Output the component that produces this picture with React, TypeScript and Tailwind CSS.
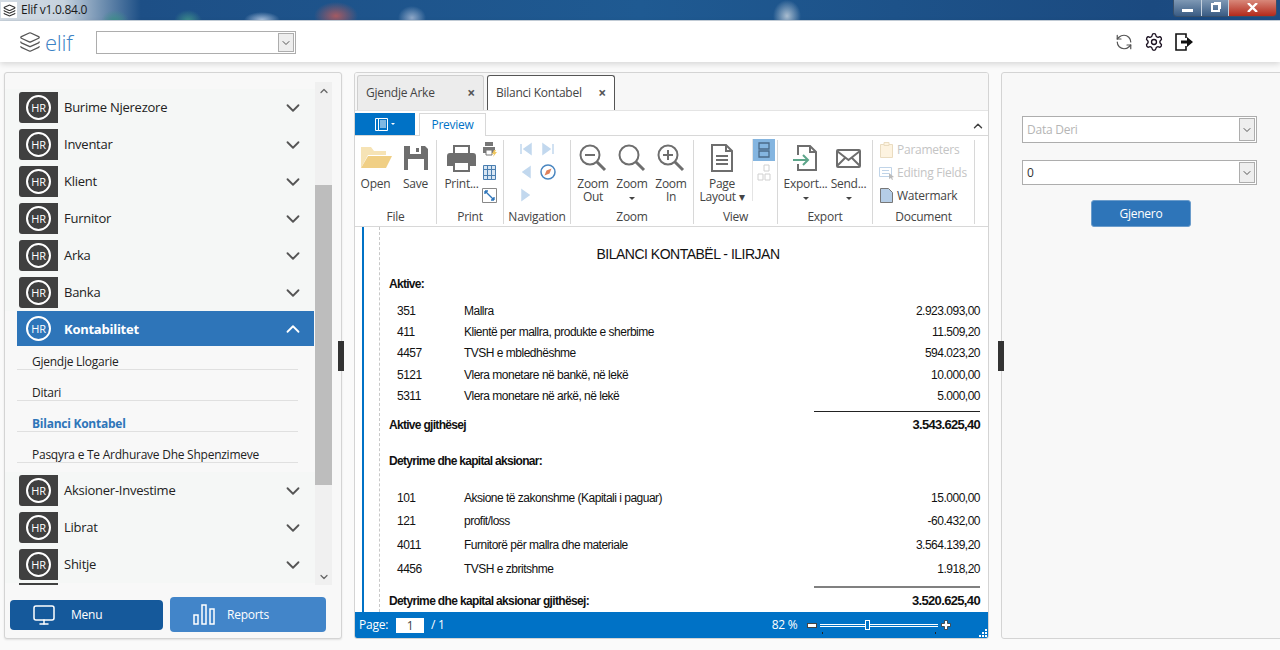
import { ChevronDown, ChevronUp, Layers, Monitor, RefreshCcw, Settings } from "lucide-react";

const font = "font-['Open_Sans','Noto_Sans',sans-serif]";

const topMenus = ["Burime Njerezore", "Inventar", "Klient", "Furnitor", "Arka", "Banka"];
const bottomMenus = ["Aksioner-Investime", "Librat", "Shitje"];
const subMenus = ["Gjendje Llogarie", "Ditari", "Bilanci Kontabel", "Pasqyra e Te Ardhurave Dhe Shpenzimeve"];

const aktive = [
  { code: "351", name: "Mallra", value: "2.923.093,00", h: "h-[21px]" },
  { code: "411", name: "Klientë per mallra, produkte e sherbime", value: "11.509,20", h: "h-[21px]" },
  { code: "4457", name: "TVSH e mbledhëshme", value: "594.023,20", h: "h-[22px]" },
  { code: "5121", name: "Vlera monetare në bankë, në lekë", value: "10.000,00", h: "h-[21px]" },
  { code: "5311", name: "Vlera monetare në arkë, në lekë", value: "5.000,00", h: "h-[22px]" },
];

const detyrime = [
  { code: "101", name: "Aksione të zakonshme (Kapitali i paguar)", value: "15.000,00", h: "h-[23px]" },
  { code: "121", name: "profit/loss", value: "-60.432,00", h: "h-[24px]" },
  { code: "4011", name: "Furnitorë për mallra dhe materiale", value: "3.564.139,20", h: "h-[24px]" },
  { code: "4456", name: "TVSH e zbritshme", value: "1.918,20", h: "h-[24px]" },
];

function HrBadge({ size = "w-[25px] h-[25px]" }: { size?: string }) {
  return (
    <span className={`${size} rounded-full border-2 border-white flex items-center justify-center text-white text-[11px] leading-none`}>
      HR
    </span>
  );
}

function MenuRow({ label }: { label: string }) {
  return (
    <div className="h-[37px] flex items-center bg-[#f5f7f6] pl-[14px] pr-[11px] shrink-0">
      <div className="w-[39px] h-[31px] bg-[#404040] rounded-l-[3px] flex items-center justify-center">
        <HrBadge />
      </div>
      <span className="ml-[6px] text-[13px] text-[#222] flex-1">{label}</span>
      <ChevronDown className="w-[22px] h-[22px] text-[#555]" strokeWidth={2} />
    </div>
  );
}

function Combo({ text, muted, w, h = "h-[25px]" }: { text: string; muted?: boolean; w: string; h?: string }) {
  return (
    <div className={`${w} ${h} bg-white border border-[#adadad] flex items-stretch justify-between pl-[4px] pr-[1px] py-[1px]`}>
      <span className={`self-center text-[12px] ${muted ? "text-[#b5b5b5]" : "text-[#333]"}`}>{text}</span>
      <span className="w-[16px] bg-[#eeeeee] border border-[#adadad] flex items-center justify-center">
        <ChevronDown className="w-[12px] h-[12px] text-[#555]" strokeWidth={2} />
      </span>
    </div>
  );
}

function Group({ label, w, children }: { label: string; w: string; children: React.ReactNode }) {
  return (
    <div className={`${w} h-[84px] mt-[4px] border-r border-[#d8d8d8] flex flex-col items-center shrink-0`}>
      <div className="flex-1 w-full flex justify-center min-h-0">{children}</div>
      <span className="text-[12px] leading-[14px] text-[#444]">{label}</span>
    </div>
  );
}

function BigButton({ icon, label, caret, w = "w-[39px]" }: { icon: React.ReactNode; label: string; caret?: boolean; w?: string }) {
  return (
    <div className={`${w} flex flex-col items-center text-[12px] leading-[13px] text-[#444]`}>
      <div className="h-[34px] flex items-center justify-center">{icon}</div>
      <span className="mt-[2px] whitespace-pre text-center">{label}</span>
      {caret && <span className="mt-[7px] w-0 h-0 border-x-[3px] border-x-transparent border-t-[3px] border-t-[#444]" />}
    </div>
  );
}

function Magnifier({ kind }: { kind: "in" | "out" | "none" }) {
  return (
    <svg width="28" height="28" viewBox="0 0 28 28" fill="none" stroke="#6e6e6e" strokeWidth="2">
      <circle cx="11" cy="11" r="9.5" />
      <path d="M18 18l8 8" strokeWidth="3" />
      {kind !== "none" && <path d="M6 11h10" />}
      {kind === "in" && <path d="M11 6v10" />}
    </svg>
  );
}

function ReportRow({ code, name, value, h }: { code: string; name: string; value: string; h: string }) {
  return (
    <div className={`${h} flex items-center text-[12px] text-[#111] tracking-[-0.5px]`}>
      <span className="w-[75px] pl-[8px]">{code}</span>
      <span className="flex-1">{name}</span>
      <span>{value}</span>
    </div>
  );
}

function NavTriangle({ dir }: { dir: "first" | "last" | "left" | "right" }) {
  const d = { first: "M13 3L6 8l7 5zM3 3v10", last: "M3 3l7 5-7 5zM13 3v10", left: "M12 3L5 8l7 5z", right: "M4 3l7 5-7 5z" }[dir];
  return (
    <svg width="16" height="16" viewBox="0 0 16 16" fill="#c2d8ee" stroke="#c2d8ee" strokeWidth="1.5">
      <path d={d} />
    </svg>
  );
}

export default function App() {
  return (
    <div className={`${font} tracking-[-0.25px] relative w-[1280px] h-[650px] overflow-hidden bg-[#fafafa] flex flex-col`}>
      {/* title bar */}
      <div className="h-[21px] shrink-0 flex items-center border-b border-[#c8d2dc] bg-[radial-gradient(ellipse_14px_11px_at_115px_21px,#3f8f8a,transparent),radial-gradient(ellipse_14px_11px_at_188px_21px,#3f8f8a,transparent),radial-gradient(ellipse_18px_8px_at_262px_20px,#a9c0dc,transparent),radial-gradient(ellipse_22px_14px_at_336px_16px,#a55a62,transparent),radial-gradient(ellipse_14px_12px_at_412px_18px,#8fa8c8,transparent),radial-gradient(ellipse_14px_16px_at_787px_16px,#a9bdd0,transparent),linear-gradient(90deg,#d4dce4_0%,#c6d2de_5%,#6f8fb0_8%,#1d4f86_11%,#1f5a92_50%,#1b4a80_90%,#1d4d85_100%)]">
        <span className="w-[16px] h-[16px] ml-[1px] bg-white flex items-center justify-center">
          <Layers className="w-[13px] h-[13px] text-[#333]" />
        </span>
        <span className="ml-[4px] text-[12px] text-[#1a1a1a]">Elif v1.0.84.0</span>
        <div className="ml-auto mr-[3px] mb-[4px] h-[17px] flex border border-t-0 border-[#39506a] rounded-b-[4px] overflow-hidden">
          <span className="w-[28px] bg-[linear-gradient(#7e98b4,#3a5c84)] flex items-end justify-center pb-[4px] border-r border-[#c5d1de]">
            <span className="w-[11px] h-[3px] bg-white" />
          </span>
          <span className="w-[27px] bg-[linear-gradient(#7e98b4,#3a5c84)] flex items-center justify-center border-r border-[#c5d1de]">
            <span className="w-[9px] h-[9px] border-2 border-white shadow-[2px_-2px_0_-1px_#ffffff]" />
          </span>
          <span className="w-[47px] bg-[linear-gradient(#d8887a,#b3291b)] flex items-center justify-center">
            <svg width="11" height="9" viewBox="0 0 11 9" stroke="#fff" strokeWidth="2.4">
              <path d="M1 0l9 9M10 0L1 9" />
            </svg>
          </span>
        </div>
      </div>

      {/* top bar */}
      <div className="h-[41px] shrink-0 bg-white flex items-center shadow-[0_2px_6px_rgba(0,0,0,0.15)] z-10">
        <Layers className="ml-[19px] w-[22px] h-[22px] text-[#555]" strokeWidth={1.4} />
        <span className="ml-[4px] text-[22px] leading-none text-[#3c82c4] font-light">elif</span>
        <div className="ml-[23px] mt-[2px]">
          <Combo text="" w="w-[200px]" h="h-[23px]" />
        </div>
        <RefreshCcw className="ml-[819px] w-[18px] h-[18px] text-[#555]" strokeWidth={1.6} />
        <Settings className="ml-[11px] w-[20px] h-[20px] text-[#1a1020]" strokeWidth={1.6} />
        <svg className="ml-[11px]" width="18" height="18" viewBox="0 0 18 18" fill="none">
          <path d="M11 5V1H1v16h10v-4" stroke="#111" strokeWidth="1.6" />
          <path d="M6 7.5h6V4l6 5-6 5v-3.5H6z" fill="#111" />
        </svg>
      </div>

      {/* main */}
      <div className="flex-1 flex pt-[10px] pb-[11px] pl-[4px] gap-[12px] min-h-0">
        {/* left panel */}
        <div className="w-[338px] shrink-0 bg-[#f8f8f8] border border-[#d4d4d4] rounded-[3px] shadow-[0_1px_2px_rgba(0,0,0,0.1)] flex flex-col">
          <div className="h-[503px] mt-[9px] flex shrink-0">
            <div className="w-[310px] overflow-hidden flex flex-col pt-[7px]">
              {topMenus.map((m) => (
                <MenuRow key={m} label={m} />
              ))}
              <div className="h-[35px] shrink-0 ml-[12px] mr-[1px] bg-[#2e75b9] flex items-center pl-[9px] pr-[10px]">
                <HrBadge />
                <span className="ml-[13px] mt-[2px] text-[13px] font-bold text-white flex-1">Kontabilitet</span>
                <ChevronUp className="w-[22px] h-[22px] text-white" strokeWidth={2} />
              </div>
              <div className="ml-[12px] mr-[17px] shrink-0 mb-[9px]">
                {subMenus.map((s, i) => (
                  <div
                    key={s}
                    className={`${i === 0 ? "h-[24px]" : "h-[31px]"} flex items-end pl-[15px] border-b border-[#e0e0e0] text-[12px] leading-[14px] ${
                      i === 2 ? "font-bold text-[#2e75b9]" : "text-[#222]"
                    }`}
                  >
                    {s}
                  </div>
                ))}
              </div>
              {bottomMenus.map((m) => (
                <MenuRow key={m} label={m} />
              ))}
              <div className="h-[3px] shrink-0 ml-[14px] w-[39px] bg-[#404040]" />
            </div>
            <div className="w-[17px] bg-[#f0f0f0] flex flex-col items-center">
              <div className="h-[103px] shrink-0">
                <ChevronUp className="w-[12px] h-[12px] mt-[3px] text-[#666]" strokeWidth={2.5} />
              </div>
              <div className="w-[17px] h-[300px] shrink-0 bg-[#bdbdbd]" />
              <div className="flex-1 flex items-end">
                <ChevronDown className="w-[12px] h-[12px] mb-[2px] text-[#666]" strokeWidth={2.5} />
              </div>
            </div>
          </div>
          <div className="flex items-center pl-[5px] gap-[7px] mt-[12px]">
            <div className="w-[153px] h-[30px] rounded-[4px] bg-[#15599b] flex items-center text-white text-[12px]">
              <Monitor className="ml-[22px] w-[24px] h-[24px]" strokeWidth={1.5} />
              <span className="ml-[15px]">Menu</span>
            </div>
            <div className="w-[156px] h-[35px] rounded-[4px] bg-[#4285c9] flex items-center text-white text-[12px]">
              <svg className="ml-[23px]" width="23" height="21" viewBox="0 0 23 21" fill="none" stroke="#fff" strokeWidth="1.5">
                <rect x="1" y="11" width="4" height="9" />
                <rect x="9" y="1" width="4" height="19" />
                <rect x="17" y="5" width="4" height="15" />
              </svg>
              <span className="ml-[11px]">Reports</span>
            </div>
          </div>
        </div>

        {/* center panel */}
        <div className="w-[635px] shrink-0 border border-[#d4d4d4] rounded-[3px] bg-white flex flex-col overflow-hidden">
          <div className="h-[38px] shrink-0 bg-[#f7f7f7] border-b border-[#e4e4e4] flex items-end pl-[2px] gap-[3px]">
            <div className="w-[127px] h-[35px] bg-[#ececec] border border-b-0 border-[#cfcfcf] rounded-t-[3px] flex items-center px-[8px] text-[12px] text-[#444]">
              <span className="flex-1">Gjendje Arke</span>
              <span className="text-[#555] text-[14px] font-bold leading-none">×</span>
            </div>
            <div className="w-[128px] h-[35px] bg-white border border-b-0 border-[#555] rounded-t-[3px] flex items-center px-[8px] text-[12px] text-[#444]">
              <span className="flex-1">Bilanci Kontabel</span>
              <span className="text-[#555] text-[14px] font-bold leading-none">×</span>
            </div>
          </div>

          {/* ribbon tabs */}
          <div className="h-[25px] shrink-0 flex items-end border-b border-[#d8d8d8]">
            <div className="w-[60px] h-[22px] bg-[#0072c6] flex items-center justify-center gap-[2px]">
              <svg width="14" height="13" viewBox="0 0 14 13" fill="none" stroke="#fff">
                <path d="M.5.5h3v12h-3zM3.5.5h9v12h-9z" />
                <path d="M5 3h6M5 5h6M5 7h6M5 9h6" />
              </svg>
              <span className="w-0 h-0 border-x-[2px] border-x-transparent border-t-[2px] border-t-white" />
            </div>
            <div className="ml-[4px] w-[67px] h-[23px] -mb-px bg-white border border-b-0 border-[#d8d8d8] flex items-center justify-center text-[12px] text-[#0072c6]">
              Preview
            </div>
            <ChevronUp className="ml-auto mr-[3px] mb-[2px] w-[14px] h-[14px] text-[#444]" strokeWidth={2.5} />
          </div>

          {/* ribbon body */}
          <div className="h-[91px] shrink-0 flex border-b border-[#d8d8d8]">
            <Group label="File" w="w-[82px]">
              <div className="flex gap-[1px] pt-[1px]">
                <BigButton
                  label="Open"
                  icon={
                    <svg width="32" height="24" viewBox="0 0 32 24">
                      <path d="M1 22V1h10l3 4h12v4H8L1 22z" fill="#f6e3b5" />
                      <path d="M8 10h24l-6 12H1z" fill="#f0cf85" />
                    </svg>
                  }
                />
                <BigButton
                  label="Save"
                  icon={
                    <svg width="26" height="26" viewBox="0 0 26 26">
                      <path d="M1 1h21l3 3v21H1z" fill="#6e6e6e" />
                      <path d="M7 1h11v8H7z" fill="#fff" />
                      <path d="M13 3h3v4h-3z" fill="#6e6e6e" />
                      <path d="M5 14h16v11H5z" fill="#fff" />
                    </svg>
                  }
                />
              </div>
            </Group>
            <Group label="Print" w="w-[67px]">
              <div className="flex gap-[2px] pt-[1px]">
                <BigButton
                  label="Print..."
                  w="w-[36px]"
                  icon={
                    <svg width="29" height="27" viewBox="0 0 29 27">
                      <path d="M7 1h15v8H7z" fill="none" stroke="#6e6e6e" strokeWidth="2" />
                      <path d="M3 8h23a3 3 0 013 3v10h-6v-5H6v5H0V11a3 3 0 013-3z" fill="#6e6e6e" />
                      <path d="M7 17h15v9H7z" fill="none" stroke="#6e6e6e" strokeWidth="2" />
                    </svg>
                  }
                />
                <div className="flex flex-col gap-[8px] pt-[1px]">
                  <svg width="15" height="15" viewBox="0 0 15 15">
                    <path d="M3 0h8v4H3zM1 5h12v6H1z" fill="#777" />
                    <path d="M4 8h6v5H4z" fill="#fff" stroke="#777" />
                    <path d="M12 8l-2 4h2l-1 3 4-5h-2l1-2z" fill="#f0c75e" />
                  </svg>
                  <svg width="15" height="15" viewBox="0 0 15 15" fill="#d8e6f3" stroke="#4a7eb0">
                    <path d="M1.5.5h12v14h-12zM5.5.5v14M9.5.5v14M1.5 4.5h12M1.5 10.5h12" />
                  </svg>
                  <svg width="15" height="15" viewBox="0 0 15 15" fill="none">
                    <path d="M.5.5h14v14H.5z" stroke="#888" />
                    <path d="M3 3l9 9M3 3h3M3 3v3M12 12H9M12 12V9" stroke="#2e75b9" strokeWidth="1.4" />
                  </svg>
                </div>
              </div>
            </Group>
            <Group label="Navigation" w="w-[67px]">
              <div className="grid grid-cols-2 gap-x-[6px] gap-y-[7px] pt-[1px] h-fit w-[38px] justify-items-center">
                <NavTriangle dir="first" />
                <NavTriangle dir="last" />
                <NavTriangle dir="left" />
                <svg width="16" height="16" viewBox="0 0 16 16" fill="none">
                  <circle cx="8" cy="8" r="7" stroke="#4a86c0" strokeWidth="1.5" />
                  <path d="M11.5 4.5L9.5 9.5 4.5 11.5 6.5 6.5z" fill="#e0805a" />
                </svg>
                <NavTriangle dir="right" />
              </div>
            </Group>
            <Group label="Zoom" w="w-[123px]">
              <div className="flex pt-[1px]">
                <BigButton label={"Zoom\nOut"} icon={<Magnifier kind="out" />} />
                <BigButton label="Zoom" caret icon={<Magnifier kind="none" />} />
                <BigButton label={"Zoom\nIn"} icon={<Magnifier kind="in" />} />
              </div>
            </Group>
            <Group label="View" w="w-[84px]">
              <div className="flex pt-[1px] w-full pl-[6px]">
                <BigButton
                  label={"Page\nLayout ▾"}
                  w="w-[44px]"
                  icon={
                    <svg width="22" height="28" viewBox="0 0 22 28" fill="none" stroke="#6e6e6e" strokeWidth="2">
                      <path d="M1 1h14l6 6v20H1z" />
                      <path d="M15 1v6h6M5 12h12M5 16h12M5 20h12" />
                    </svg>
                  }
                />
                <div className="ml-[8px] -mt-[2px] flex flex-col items-center border-l border-[#e4e4e4] h-[62px]">
                  <div className="w-[22px] h-[22px] bg-[#84b5e0] flex items-center justify-center">
                    <svg width="12" height="16" viewBox="0 0 12 16" fill="none" stroke="#4a6a88" strokeWidth="1.3">
                      <path d="M1 1h10v6H1zM1 9h10v6H1z" />
                    </svg>
                  </div>
                  <svg className="mt-[3px]" width="16" height="18" viewBox="0 0 16 18" fill="none" stroke="#d0d0d0">
                    <path d="M8 1h5v6H8zM2 10h5v6H2zM9 10h5v6H9z" />
                  </svg>
                </div>
              </div>
            </Group>
            <Group label="Export" w="w-[95px]">
              <div className="flex pt-[1px] gap-[3px]">
                <BigButton
                  label="Export..."
                  caret
                  w="w-[44px]"
                  icon={
                    <svg width="26" height="26" viewBox="0 0 26 26" fill="none">
                      <path d="M5 10V1h12l6 6v18H5v-6" stroke="#6e6e6e" strokeWidth="2" />
                      <path d="M17 1v6h6" stroke="#6e6e6e" strokeWidth="2" />
                      <path d="M0 15h14M10 10l5 5-5 5" stroke="#5da58a" strokeWidth="2" />
                    </svg>
                  }
                />
                <BigButton
                  label="Send..."
                  caret
                  w="w-[36px]"
                  icon={
                    <svg width="25" height="19" viewBox="0 0 25 19" fill="none" stroke="#6e6e6e" strokeWidth="2">
                      <rect x="1" y="1" width="23" height="17" rx="1" />
                      <path d="M1 2l11.5 9L24 2M1 17l8-8M24 17l-8-8" />
                    </svg>
                  }
                />
              </div>
            </Group>
            <Group label="Document" w="w-[102px]">
              <div className="flex flex-col items-start gap-[6px] w-full pl-[7px] pt-[1px] text-[12px] leading-[17px]">
                <div className="flex items-center gap-[4px] text-[#c4c4c4]">
                  <svg width="13" height="16" viewBox="0 0 13 16" fill="#fdf3e0" stroke="#eadcc0">
                    <path d="M.5 2.5h12v13H.5z" />
                    <path d="M4 .5h5v3H4z" />
                  </svg>
                  Parameters
                </div>
                <div className="flex items-center gap-[2px] text-[#c4c4c4] -ml-[1px]">
                  <svg width="16" height="14" viewBox="0 0 16 14" fill="none" stroke="#c0d4e8">
                    <path d="M.5 1.5h12v9H.5zM3 4.5h7M3 7.5h7" />
                    <path d="M10 7l5 4-2 .5 1 2-1 .5-1-2-2 1z" fill="#bbb" stroke="none" />
                  </svg>
                  Editing Fields
                </div>
                <div className="flex items-center gap-[4px] text-[#444]">
                  <svg width="13" height="15" viewBox="0 0 13 15" fill="#b5cde6" stroke="#777">
                    <path d="M.5.5h8l4 4v10H.5z" />
                  </svg>
                  Watermark
                </div>
              </div>
            </Group>
          </div>

          {/* report */}
          <div className="flex-1 min-h-0 overflow-hidden flex font-['Liberation_Sans',Arial,sans-serif]">
            <div className="ml-[7px] w-[2px] bg-[#0072c6] shrink-0" />
            <div className="ml-[15px] w-0 border-l border-dashed border-[#c8c8c8] shrink-0" />
            <div className="ml-[9px] w-[591px] pt-[15px] shrink-0">
              <div className="text-center text-[14px] leading-[24px] text-[#111] tracking-[-0.5px] pl-[7px]">BILANCI KONTABËL - ILIRJAN</div>
              <div className="mt-[8px] h-[20px] flex items-center text-[12px] font-bold tracking-[-0.7px] text-[#111]">Aktive:</div>
              <div className="mt-[6px]">
                {aktive.map((r) => (
                  <ReportRow key={r.code} {...r} />
                ))}
              </div>
              <div className="mt-[4px] ml-[425px] border-t border-[#222]" />
              <div className="h-[26px] flex items-center justify-between text-[12px] font-bold tracking-[-0.7px] text-[#111]">
                <span>Aktive gjithësej</span>
                <span className="text-[13px]">3.543.625,40</span>
              </div>
              <div className="mt-[13px] h-[20px] flex items-center text-[12px] font-bold tracking-[-0.7px] text-[#111]">Detyrime dhe kapital aksionar:</div>
              <div className="mt-[15px]">
                {detyrime.map((r) => (
                  <ReportRow key={r.code} {...r} />
                ))}
              </div>
              <div className="mt-[5px] ml-[425px] border-t-2 border-[#808080]" />
              <div className="h-[26px] flex items-center justify-between text-[12px] font-bold tracking-[-0.65px] text-[#111]">
                <span>Detyrime dhe kapital aksionar gjithësej:</span>
                <span className="text-[13px]">3.520.625,40</span>
              </div>
            </div>
          </div>

          {/* status bar */}
          <div className="relative h-[26px] shrink-0 bg-[#0072c6] flex items-center text-white text-[12px] pl-[4px]">
            <span>Page:</span>
            <span className="ml-[8px] mt-[1px] w-[28px] h-[15px] bg-white text-[#444] flex items-center justify-center">1</span>
            <span className="ml-[7px]">/ 1</span>
            <span className="ml-[327px]">82 %</span>
            <span className="ml-[10px] w-[10px] h-[5px] bg-white border border-[#444]" />
            <div className="relative ml-[3px] w-[118px] h-[3px] border-y border-white">
              <span className="absolute left-[45px] -top-[5px] w-[5px] h-[10px] bg-[#0072c6] border border-white" />
              <span className="absolute left-[2px] top-[7px] w-px h-[2px] bg-[#222]" />
              <span className="absolute left-[115px] top-[7px] w-px h-[2px] bg-[#222]" />
            </div>
            <svg className="ml-[3px]" width="10" height="10" viewBox="0 0 10 10" fill="#fff" stroke="#333" strokeWidth="0.8">
              <path d="M3.5.5h3v3h3v3h-3v3h-3v-3h-3v-3h3z" />
            </svg>
            <svg className="absolute right-[1px] bottom-[1px]" width="9" height="9" viewBox="0 0 9 9" fill="#fff">
              <path d="M7 1h2v2H7zM4 4h2v2H4zM7 4h2v2H7zM1 7h2v2H1zM4 7h2v2H4zM7 7h2v2H7z" />
            </svg>
          </div>
        </div>

        {/* right panel */}
        <div className="w-[280px] shrink-0 bg-[#f8f8f8] border border-[#d4d4d4] rounded-l-[3px] flex flex-col items-start pl-[20px] pt-[43px]">
          <Combo text="Data Deri" muted w="w-[235px]" h="h-[27px]" />
          <div className="mt-[17px]">
            <Combo text="0" w="w-[235px]" />
          </div>
          <div className="mt-[15px] ml-[69px] w-[100px] h-[27px] rounded-[3px] bg-[#2e75b9] border border-[#6b9ccb] flex items-center justify-center text-white text-[12px]">
            Gjenero
          </div>
        </div>
      </div>

      {/* splitter handles */}
      <span className="absolute left-[338px] top-[341px] w-[6px] h-[30px] bg-[#333]" />
      <span className="absolute left-[998px] top-[341px] w-[6px] h-[30px] bg-[#333]" />
    </div>
  );
}
